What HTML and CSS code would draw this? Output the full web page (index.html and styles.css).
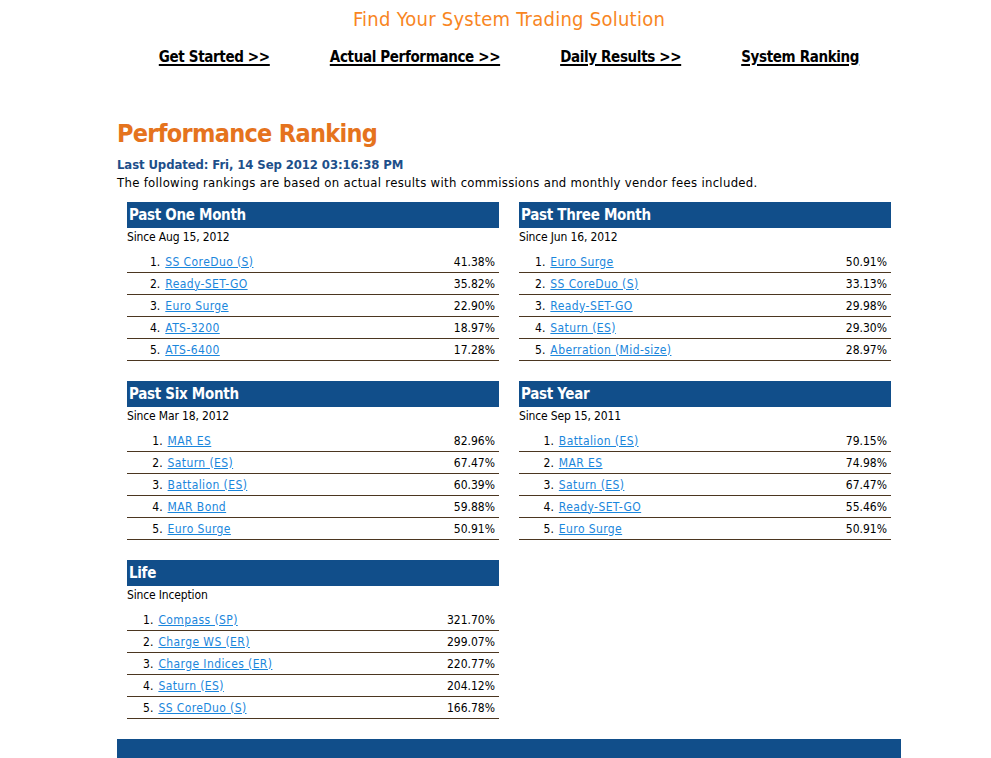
FILE: index.html
```html
<!DOCTYPE html>
<html lang="en">
<head>
<meta charset="utf-8">
<title>Performance Ranking</title>
<link rel="stylesheet" href="styles.css">
</head>
<body>
<div class="page">
  <header class="site-header">
    <div class="site-title">Find Your System Trading Solution</div>
    <nav class="main-nav">
      <a href="#">Get Started &gt;&gt;</a>
      <a href="#">Actual Performance &gt;&gt;</a>
      <a href="#">Daily Results &gt;&gt;</a>
      <a href="#">System Ranking</a>
    </nav>
  </header>

  <main class="content">
    <h1 class="page-title">Performance Ranking</h1>
    <p class="updated">Last Updated: Fri, 14 Sep 2012 03:16:38 PM</p>
    <p class="intro">The following rankings are based on actual results with commissions and monthly vendor fees included.</p>

    <div class="rankings">
      <section class="panel">
        <h2 class="panel-head">Past One Month</h2>
        <div class="since">Since Aug 15, 2012</div>
        <table class="rank-table">
          <tr><td class="num">1.</td><td class="name"><a href="#">SS CoreDuo (S)</a></td><td class="pct">41.38%</td></tr>
          <tr><td class="num">2.</td><td class="name"><a href="#">Ready-SET-GO</a></td><td class="pct">35.82%</td></tr>
          <tr><td class="num">3.</td><td class="name"><a href="#">Euro Surge</a></td><td class="pct">22.90%</td></tr>
          <tr><td class="num">4.</td><td class="name"><a href="#">ATS-3200</a></td><td class="pct">18.97%</td></tr>
          <tr><td class="num">5.</td><td class="name"><a href="#">ATS-6400</a></td><td class="pct">17.28%</td></tr>
        </table>
      </section>

      <section class="panel">
        <h2 class="panel-head">Past Three Month</h2>
        <div class="since">Since Jun 16, 2012</div>
        <table class="rank-table">
          <tr><td class="num">1.</td><td class="name"><a href="#">Euro Surge</a></td><td class="pct">50.91%</td></tr>
          <tr><td class="num">2.</td><td class="name"><a href="#">SS CoreDuo (S)</a></td><td class="pct">33.13%</td></tr>
          <tr><td class="num">3.</td><td class="name"><a href="#">Ready-SET-GO</a></td><td class="pct">29.98%</td></tr>
          <tr><td class="num">4.</td><td class="name"><a href="#">Saturn (ES)</a></td><td class="pct">29.30%</td></tr>
          <tr><td class="num">5.</td><td class="name"><a href="#">Aberration (Mid-size)</a></td><td class="pct">28.97%</td></tr>
        </table>
      </section>

      <section class="panel">
        <h2 class="panel-head">Past Six Month</h2>
        <div class="since">Since Mar 18, 2012</div>
        <table class="rank-table">
          <tr><td class="num">1.</td><td class="name"><a href="#">MAR ES</a></td><td class="pct">82.96%</td></tr>
          <tr><td class="num">2.</td><td class="name"><a href="#">Saturn (ES)</a></td><td class="pct">67.47%</td></tr>
          <tr><td class="num">3.</td><td class="name"><a href="#">Battalion (ES)</a></td><td class="pct">60.39%</td></tr>
          <tr><td class="num">4.</td><td class="name"><a href="#">MAR Bond</a></td><td class="pct">59.88%</td></tr>
          <tr><td class="num">5.</td><td class="name"><a href="#">Euro Surge</a></td><td class="pct">50.91%</td></tr>
        </table>
      </section>

      <section class="panel">
        <h2 class="panel-head">Past Year</h2>
        <div class="since">Since Sep 15, 2011</div>
        <table class="rank-table">
          <tr><td class="num">1.</td><td class="name"><a href="#">Battalion (ES)</a></td><td class="pct">79.15%</td></tr>
          <tr><td class="num">2.</td><td class="name"><a href="#">MAR ES</a></td><td class="pct">74.98%</td></tr>
          <tr><td class="num">3.</td><td class="name"><a href="#">Saturn (ES)</a></td><td class="pct">67.47%</td></tr>
          <tr><td class="num">4.</td><td class="name"><a href="#">Ready-SET-GO</a></td><td class="pct">55.46%</td></tr>
          <tr><td class="num">5.</td><td class="name"><a href="#">Euro Surge</a></td><td class="pct">50.91%</td></tr>
        </table>
      </section>

      <section class="panel">
        <h2 class="panel-head">Life</h2>
        <div class="since">Since Inception</div>
        <table class="rank-table">
          <tr><td class="num">1.</td><td class="name"><a href="#">Compass (SP)</a></td><td class="pct">321.70%</td></tr>
          <tr><td class="num">2.</td><td class="name"><a href="#">Charge WS (ER)</a></td><td class="pct">299.07%</td></tr>
          <tr><td class="num">3.</td><td class="name"><a href="#">Charge Indices (ER)</a></td><td class="pct">220.77%</td></tr>
          <tr><td class="num">4.</td><td class="name"><a href="#">Saturn (ES)</a></td><td class="pct">204.12%</td></tr>
          <tr><td class="num">5.</td><td class="name"><a href="#">SS CoreDuo (S)</a></td><td class="pct">166.78%</td></tr>
        </table>
      </section>
    </div>
  </main>

  <footer class="site-footer"></footer>
</div>
</body>
</html>
```

FILE: styles.css
```css
html, body {
  margin: 0;
  padding: 0;
  background: #ffffff;
}

body {
  font-family: "DejaVu Sans", Verdana, sans-serif;
  font-stretch: condensed;
  color: #000000;
}

.page {
  width: 784px;
  margin-left: 117px;
  padding-top: 7px;
}

.site-title {
  text-align: center;
  font-size: 20px;
  line-height: 24px;
  letter-spacing: 0.25px;
  color: #f8861f;
}

.main-nav {
  display: flex;
  justify-content: center;
  gap: 60px;
  margin-top: 16px;
  height: 20px;
}

.main-nav a {
  font-size: 15px;
  line-height: 20px;
  font-weight: bold;
  letter-spacing: -0.35px;
  color: #000000;
  text-decoration: underline;
  text-decoration-thickness: 2px;
  text-underline-offset: 2px;
}

.content {
  margin-top: 52px;
}

.page-title {
  margin: 0;
  font-size: 25px;
  line-height: 30px;
  font-weight: bold;
  letter-spacing: -0.7px;
  color: #e5731d;
}

.updated {
  margin: 7px 0 0;
  font-size: 13px;
  line-height: 18px;
  font-weight: bold;
  letter-spacing: -0.1px;
  color: #1d4f8a;
}

.intro {
  margin: 0;
  font-size: 13px;
  line-height: 18px;
  letter-spacing: 0.3px;
}

.rankings {
  display: grid;
  grid-template-columns: 372px 372px;
  column-gap: 20px;
  row-gap: 20px;
  margin: 10px 0 0 10px;
}

.panel-head {
  margin: 0;
  height: 25px;
  padding: 1px 0 0 2px;
  background: #114e8a;
  color: #ffffff;
  font-size: 15px;
  line-height: 25px;
  font-weight: bold;
  letter-spacing: -0.3px;
}

.since {
  font-size: 12px;
  line-height: 18px;
  height: 23px;
  letter-spacing: -0.15px;
}

.rank-table {
  width: 100%;
  border-collapse: collapse;
  font-size: 12px;
}

.rank-table td {
  height: 21px;
  padding: 0;
  border-bottom: 1px solid #4b3620;
  vertical-align: middle;
}

.rank-table .num {
  text-align: right;
  padding-right: 5px;
}

.rank-table .name {
  text-align: left;
  letter-spacing: 0.4px;
}

.rank-table .pct {
  text-align: right;
  padding-right: 4px;
}

.rank-table a {
  color: #1a86dc;
  text-decoration: underline;
}

.site-footer {
  margin-top: 20px;
  height: 30px;
  background: #114e8a;
}
```
